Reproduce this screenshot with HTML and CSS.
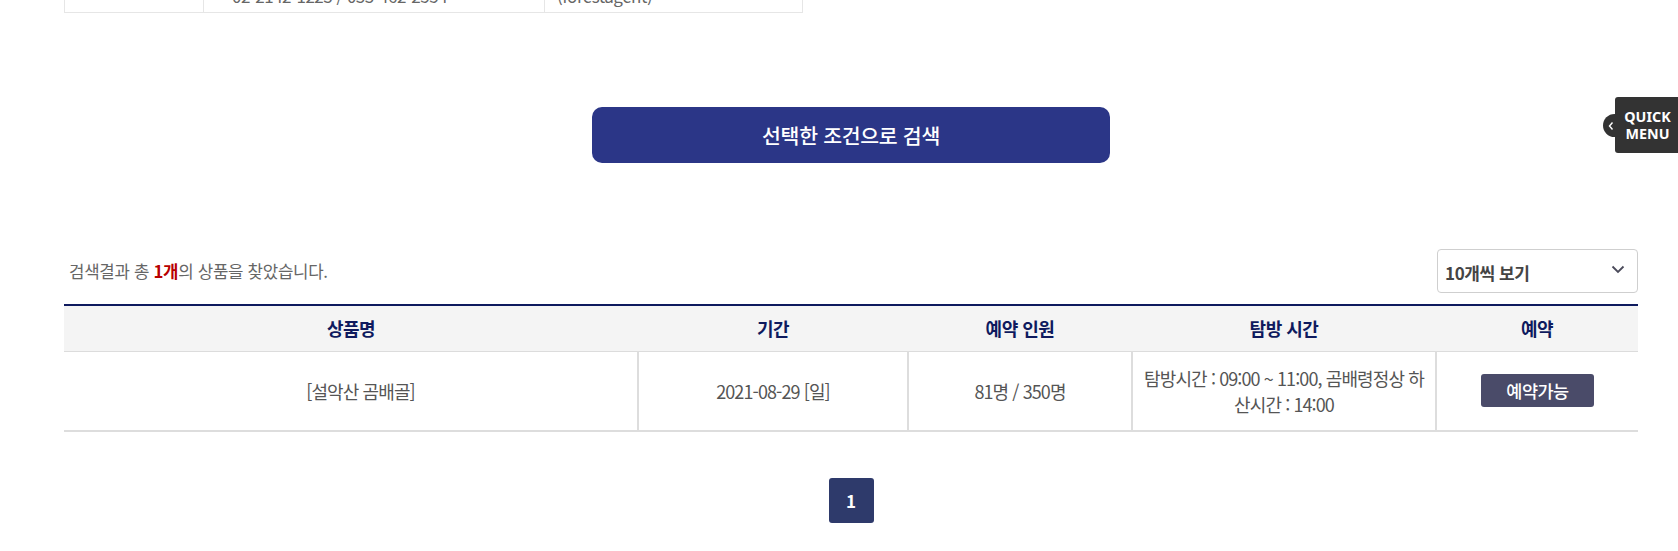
FILE: index.html
```html
<!DOCTYPE html>
<html lang="ko">
<head>
<meta charset="utf-8">
<title>검색결과</title>
<link rel="stylesheet" href="styles.css">
</head>
<body>
<div class="wrap">
  <table class="info">
    <colgroup><col class="c1"><col class="c2"><col class="c3"></colgroup>
    <tr>
      <td></td>
      <td class="txt">02-2142-1223 / 033-462-2554</td>
      <td class="txt">(forestagent)</td>
    </tr>
  </table>

  <div class="search-row">
    <button class="search-btn" type="button">선택한 조건으로 검색</button>
  </div>

  <div class="result-bar">
    <p class="result-count">검색결과 총 <strong>1개</strong>의 상품을 찾았습니다.</p>
    <div class="select">
      <span>10개씩 보기</span>
      <svg class="chev" width="14" height="9" viewBox="0 0 14 9"><path d="M1.5 1.5 L7 7 L12.5 1.5" fill="none" stroke="#4a4a5a" stroke-width="1.8"/></svg>
    </div>
  </div>

  <table class="list">
    <colgroup>
      <col class="w1"><col class="w2"><col class="w3"><col class="w4"><col class="w5">
    </colgroup>
    <thead>
      <tr><th>상품명</th><th>기간</th><th>예약 인원</th><th>탐방 시간</th><th>예약</th></tr>
    </thead>
    <tbody>
      <tr>
        <td class="name">[설악산 곰배골]</td>
        <td>2021-08-29 [일]</td>
        <td>81명 / 350명</td>
        <td class="time">탐방시간 : 09:00 ~ 11:00, 곰배령정상 하산시간 : 14:00</td>
        <td><button class="book" type="button">예약가능</button></td>
      </tr>
    </tbody>
  </table>

  <div class="paging">
    <a class="page on" href="#">1</a>
  </div>
</div>

<div class="quick">
  <span class="quick-arrow"><svg width="8" height="10" viewBox="0 0 8 10"><path d="M5.5 1.5 L2.5 5 L5.5 8.5" fill="none" stroke="#fff" stroke-width="1.4"/></svg></span>
  <span class="quick-text">QUICK<br>MENU</span>
</div>
</body>
</html>
```

FILE: styles.css
```css
* { box-sizing: border-box; }
html, body { margin: 0; padding: 0; background: #fff; }
body {
  font-family: "Noto Sans CJK KR", "Noto Sans", sans-serif;
  color: #555;
  overflow: hidden;
}
.wrap {
  width: 1574px;
  margin-left: 64px;
}

/* top info table (cut off) */
.info {
  width: 738px;
  border-collapse: collapse;
  margin-top: -22px;
  table-layout: fixed;
}
.info .c1 { width: 139px; }
.info .c2 { width: 341px; }
.info .c3 { width: 258px; }
.info td {
  height: 34px;
  border: 1px solid #e6e6e6;
  font-size: 17px;
  color: #666;
  padding: 0 14px;
  vertical-align: middle;
  white-space: nowrap;
  letter-spacing: -0.5px;
}
.info td:nth-child(2) { padding-left: 28px; }
.info td:nth-child(3) { padding-left: 12px; }

/* search button */
.search-row {
  display: flex;
  justify-content: center;
  margin-top: 94px;
}
.search-btn {
  width: 518px;
  height: 56px;
  border: 0;
  border-radius: 10px;
  background: #2b3687;
  color: #fff;
  font-family: inherit;
  font-size: 20.5px;
  font-weight: 500;
  letter-spacing: -0.3px;
}

/* result bar */
.result-bar {
  display: flex;
  justify-content: space-between;
  align-items: center;
  margin-top: 86px;
}
.result-count {
  margin: 0 0 0 5px;
  font-size: 16.8px;
  color: #666;
  letter-spacing: -0.3px;
}
.result-count strong {
  color: #b80000;
  font-weight: 700;
}
.select {
  width: 201px;
  height: 44px;
  border: 1px solid #cfcfcf;
  border-radius: 4px;
  display: flex;
  align-items: center;
  justify-content: space-between;
  padding: 0 12px 2px 7px;
  font-size: 17px;
  font-weight: 700;
  color: #444;
  letter-spacing: -0.4px;
}
.select span { margin-top: 5px; }
.chev { margin-top: -2px; }

/* list table */
.list {
  width: 100%;
  margin-top: 11px;
  border-collapse: collapse;
  table-layout: fixed;
  border-top: 2px solid #0e1a5e;
  border-bottom: 2px solid #ddd;
}
.list .w1 { width: 574px; }
.list .w2 { width: 270px; }
.list .w3 { width: 224px; }
.list .w4 { width: 304px; }
.list .w5 { width: 202px; }
.list th {
  height: 46px;
  background: #f4f4f4;
  border-bottom: 1px solid #dcdcdc;
  color: #0e1a5e;
  font-size: 18px;
  font-weight: 700;
  letter-spacing: -0.5px;
}
.list td {
  height: 80px;
  text-align: center;
  font-size: 18px;
  color: #555;
  letter-spacing: -0.9px;
  border-left: 2px solid #ddd;
  line-height: 26px;
  padding: 0 8px;
}
.list td:first-child { border-left: 0; }
.list td.name { padding-left: 28px; }
.list td.time { padding: 0 10px; }
.book {
  width: 113px;
  height: 33px;
  border: 0;
  border-radius: 3px;
  background: #4a4b69;
  color: #fff;
  font-family: inherit;
  font-size: 17.5px;
  font-weight: 500;
  letter-spacing: -0.5px;
}

/* paging */
.paging {
  display: flex;
  justify-content: center;
  margin-top: 46px;
}
.page {
  width: 45px;
  height: 45px;
  display: flex;
  align-items: center;
  justify-content: center;
  border-radius: 3px;
  background: #2e3a6b;
  color: #fff;
  font-size: 17px;
  font-weight: 700;
  text-decoration: none;
}

/* quick menu */
.quick {
  position: fixed;
  top: 97px;
  right: 0;
  width: 63px;
  height: 56px;
  background: #333;
  border-radius: 3px 0 0 3px;
  display: flex;
  align-items: center;
  justify-content: center;
}
.quick-text {
  color: #fff;
  font-family: "Noto Sans", sans-serif;
  font-size: 14.3px;
  font-weight: 700;
  line-height: 17px;
  text-align: center;
  margin-left: 2px;
}
.quick-arrow {
  position: absolute;
  left: -12px;
  top: 17px;
  width: 23px;
  height: 23px;
  border-radius: 50%;
  background: #333;
  display: flex;
  align-items: center;
  justify-content: center;
  padding-right: 8px;
}
```
